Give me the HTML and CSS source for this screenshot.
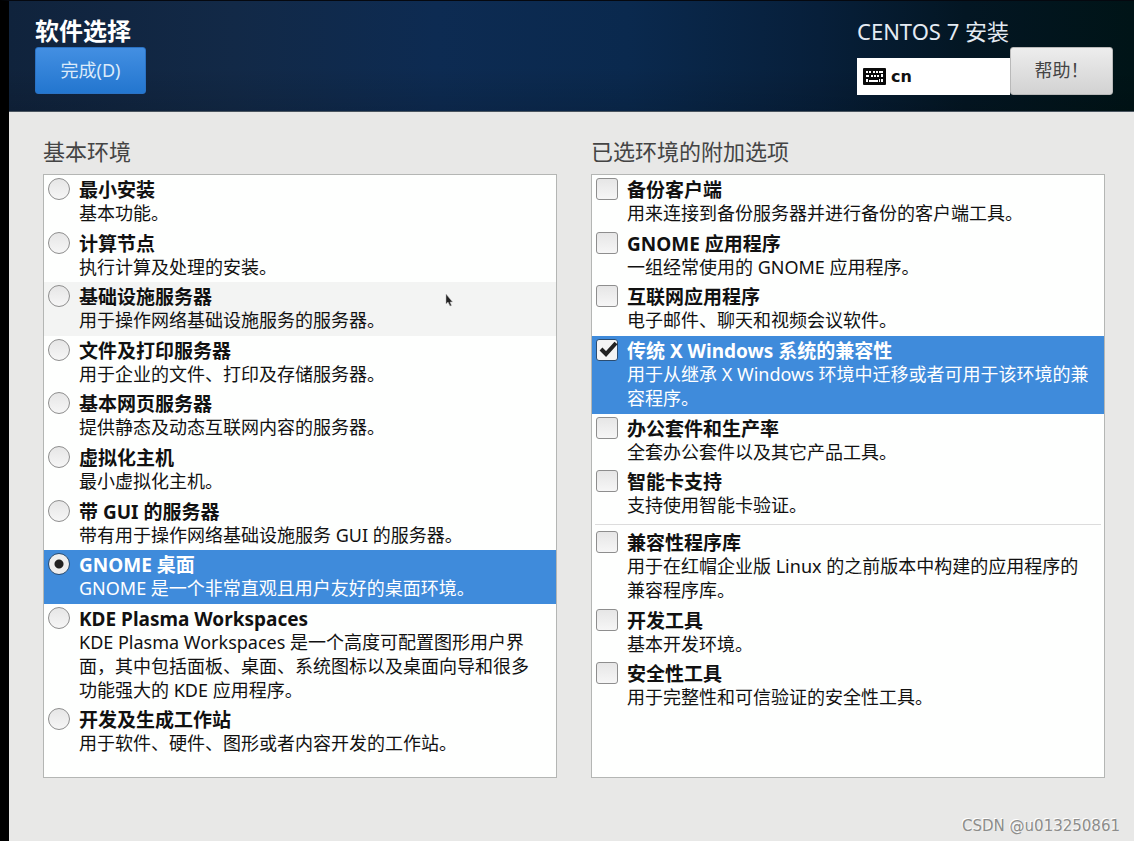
FILE: index.html
```html
<!DOCTYPE html>
<html lang="zh-CN">
<head>
<meta charset="utf-8">
<meta name="viewport" content="width=device-width, initial-scale=1">
<title>软件选择</title>
<link rel="stylesheet" href="styles.css">
</head>
<body>
<div class="screen">
  <header class="topbar">
    <div class="topbar-start">
      <h1 class="page-title">软件选择</h1>
      <button class="btn btn-primary" type="button">完成(D)</button>
    </div>
    <div class="topbar-end">
      <p class="product">CENTOS 7 安装</p>
      <div class="tools">
        <div class="keyboard">
          <svg class="keyboard-icon" viewBox="0 0 23 17" aria-hidden="true">
            <rect width="23" height="17" rx="1" fill="#0a0a0a"/>
            <g fill="#fff">
              <path d="M3 3h2v2H3zM6 3h2v2H6zM10 3h2v2h-2zM13 3h2v2h-2zM16 3h4v2h-4z"/>
              <path d="M3 7h3v2H3zM8 7h2v2H8zM11 7h2v2h-2zM14 7h2v2h-2zM18 6h2v3h-2z"/>
              <path d="M3 11h2v3H3zM6 12h9v2H6zM16 11h1v3h-1zM18 11h2v3h-2z"/>
            </g>
          </svg>
          <span>cn</span>
        </div>
        <button class="btn btn-help" type="button">帮助！</button>
      </div>
    </div>
  </header>

  <main class="content">
    <section class="panel">
      <h2 class="panel-title" id="base-title">基本环境</h2>
      <div class="list list-base" role="radiogroup" aria-labelledby="base-title">
        <label class="row"><input class="mark radio" type="radio" name="env"><span class="text"><b class="name">最小安装</b><span class="desc">基本功能。</span></span></label>
        <label class="row"><input class="mark radio" type="radio" name="env"><span class="text"><b class="name">计算节点</b><span class="desc">执行计算及处理的安装。</span></span></label>
        <label class="row row-hover"><input class="mark radio" type="radio" name="env"><span class="text"><b class="name">基础设施服务器</b><span class="desc">用于操作网络基础设施服务的服务器。</span></span>
          <svg class="pointer" viewBox="0 0 8 13" aria-hidden="true"><path d="M1 0v10l2-2 2 4 1.500-.5L5 8h2.500z" fill="#222" stroke="#bbb" stroke-width=".5"/></svg>
        </label>
        <label class="row"><input class="mark radio" type="radio" name="env"><span class="text"><b class="name">文件及打印服务器</b><span class="desc">用于企业的文件、打印及存储服务器。</span></span></label>
        <label class="row"><input class="mark radio" type="radio" name="env"><span class="text"><b class="name">基本网页服务器</b><span class="desc">提供静态及动态互联网内容的服务器。</span></span></label>
        <label class="row"><input class="mark radio" type="radio" name="env"><span class="text"><b class="name">虚拟化主机</b><span class="desc">最小虚拟化主机。</span></span></label>
        <label class="row"><input class="mark radio" type="radio" name="env"><span class="text"><b class="name">带 GUI 的服务器</b><span class="desc">带有用于操作网络基础设施服务 GUI 的服务器。</span></span></label>
        <label class="row"><input class="mark radio" type="radio" name="env" checked><span class="text"><b class="name">GNOME 桌面</b><span class="desc">GNOME 是一个非常直观且用户友好的桌面环境。</span></span></label>
        <label class="row"><input class="mark radio" type="radio" name="env"><span class="text"><b class="name">KDE Plasma Workspaces</b><span class="desc">KDE Plasma Workspaces 是一个高度可配置图形用户界<br>面，其中包括面板、桌面、系统图标以及桌面向导和很多<br>功能强大的 KDE 应用程序。</span></span></label>
        <label class="row"><input class="mark radio" type="radio" name="env"><span class="text"><b class="name">开发及生成工作站</b><span class="desc">用于软件、硬件、图形或者内容开发的工作站。</span></span></label>
      </div>
    </section>

    <section class="panel">
      <h2 class="panel-title" id="addon-title">已选环境的附加选项</h2>
      <div class="list list-addons" role="group" aria-labelledby="addon-title">
        <label class="row"><input class="mark check" type="checkbox"><span class="text"><b class="name">备份客户端</b><span class="desc">用来连接到备份服务器并进行备份的客户端工具。</span></span></label>
        <label class="row"><input class="mark check" type="checkbox"><span class="text"><b class="name">GNOME 应用程序</b><span class="desc">一组经常使用的 GNOME 应用程序。</span></span></label>
        <label class="row"><input class="mark check" type="checkbox"><span class="text"><b class="name">互联网应用程序</b><span class="desc">电子邮件、聊天和视频会议软件。</span></span></label>
        <label class="row"><span class="check-wrap"><input class="mark check" type="checkbox" checked><svg class="tick" viewBox="0 0 22 22" aria-hidden="true"><path d="M5 10l5 5 10-11" fill="none" stroke="#222" stroke-width="4"/></svg></span><span class="text"><b class="name">传统 X Windows 系统的兼容性</b><span class="desc">用于从继承 X Windows 环境中迁移或者可用于该环境的兼<br>容程序。</span></span></label>
        <label class="row"><input class="mark check" type="checkbox"><span class="text"><b class="name">办公套件和生产率</b><span class="desc">全套办公套件以及其它产品工具。</span></span></label>
        <label class="row"><input class="mark check" type="checkbox"><span class="text"><b class="name">智能卡支持</b><span class="desc">支持使用智能卡验证。</span></span></label>
        <hr class="divider">
        <label class="row"><input class="mark check" type="checkbox"><span class="text"><b class="name">兼容性程序库</b><span class="desc">用于在红帽企业版 Linux 的之前版本中构建的应用程序的<br>兼容程序库。</span></span></label>
        <label class="row"><input class="mark check" type="checkbox"><span class="text"><b class="name">开发工具</b><span class="desc">基本开发环境。</span></span></label>
        <label class="row"><input class="mark check" type="checkbox"><span class="text"><b class="name">安全性工具</b><span class="desc">用于完整性和可信验证的安全性工具。</span></span></label>
      </div>
    </section>
  </main>
  <p class="watermark">CSDN @u013250861</p>
</div>
</body>
</html>
```
FILE: styles.css
```css
* {
  box-sizing: border-box;
}

body {
  margin: 0;
  background: #000;
  color: #111;
  font-family: "Noto Sans", "Noto Sans CJK SC", sans-serif;
  font-size: 18px;
}

h1, h2, p {
  margin: 0;
}

.screen {
  position: relative;
  display: flex;
  flex-direction: column;
  min-height: 100vh;
  border-top: 1px solid #05080f;
  border-left: 9px solid #000;
  background: #e8e8e7;
}

/* Header */
.topbar {
  display: flex;
  justify-content: space-between;
  height: 111px;
  padding: 14px 21px 0 26px;
  border-bottom: 1px solid #4a5560;
  background:
    linear-gradient(180deg, rgba(0, 0, 0, 0) 60%, rgba(0, 0, 0, .12)),
    linear-gradient(90deg, #10233c 0%, #122947 20%, #0d2b52 38%, #0a294e 55%, #071f3a 72%, #031623 85%, #001417 100%);
}

.page-title {
  height: 32px;
  color: #fff;
  font-size: 24px;
  line-height: 32px;
}

.btn {
  padding: 0 6px 4px;
  border-radius: 3px;
  font: inherit;
}

.btn-primary {
  width: 111px;
  height: 47px;
  border: 1px solid #2a72c4;
  background: linear-gradient(#438fe2, #2376cf);
  color: #dcebfa;
}

.product {
  height: 32px;
  color: #e4ebf3;
  font-size: 22px;
  line-height: 32px;
}

.tools {
  display: flex;
  align-items: flex-end;
}

.keyboard {
  display: flex;
  align-items: center;
  gap: 5px;
  width: 153px;
  height: 37px;
  padding-left: 6px;
  background: #fff;
  font-family: "DejaVu Sans", sans-serif;
  font-size: 16px;
  font-weight: bold;
}

.keyboard-icon {
  width: 23px;
  height: 17px;
}

.btn-help {
  width: 103px;
  height: 48px;
  border: 1px solid #b9b9b9;
  background: linear-gradient(#ededed, #d2d2d2);
  color: #444;
  font-family: "Noto Sans CJK TC", "Noto Sans CJK SC", sans-serif;
}

/* Panels */
.content {
  flex: 1;
  display: grid;
  grid-template-columns: 1fr 1fr;
  gap: 34px;
  padding: 24px 29px 63px 34px;
}

.panel {
  display: flex;
  flex-direction: column;
}

.panel-title {
  height: 38px;
  color: #444;
  font-size: 22px;
  font-weight: normal;
  line-height: 30px;
}

.list {
  flex: 1;
  display: flex;
  flex-direction: column;
  border: 1px solid #b4b6b4;
  background: #fefffe;
}

.list-base {
  padding-bottom: 18px;
}

.list-addons {
  padding-bottom: 64px;
}

.row {
  position: relative;
  flex: 1 0 auto;
  display: flex;
  align-items: flex-start;
  gap: 9px;
  padding: 2px 0 3px 4px;
}

.row-hover {
  background: #f3f4f3;
}

.row:has(:checked) {
  background: #3f8bdb;
  color: #fff;
}

.text,
.name,
.desc {
  display: block;
}

.name {
  height: 24px;
  font-size: 19px;
  line-height: 26px;
}

.desc {
  line-height: 24px;
  white-space: nowrap;
}

.mark {
  appearance: none;
  flex: none;
  display: block;
  width: 22px;
  height: 22px;
  margin: 1px 0 0;
  border: 1px solid #8e8e8e;
  background: linear-gradient(#e6e6e6, #f6f6f6);
}

.radio {
  border-radius: 50%;
}

.radio:checked {
  border-color: #2b4c70;
  background: radial-gradient(circle, #222 0 4px, #eee 5px);
}

.check {
  border-radius: 3px;
}

.check:checked {
  border-color: #2b4c70;
  background: #f4f4f4;
}

.check-wrap {
  position: relative;
}

.tick {
  position: absolute;
  top: 1px;
  left: 0;
  width: 22px;
  height: 22px;
  pointer-events: none;
}

.pointer {
  position: absolute;
  top: 12px;
  left: 401px;
  width: 8px;
  height: 13px;
}

.divider {
  width: calc(100% - 6px);
  height: 1px;
  margin: 3px;
  border: 0;
  background: #dcdcdc;
}

.watermark {
  position: absolute;
  right: 14px;
  bottom: 5px;
  color: #8d8d8b;
  font-family: "DejaVu Sans", sans-serif;
  font-size: 15px;
  line-height: 20px;
  text-shadow: -1px -1px 0 #fff;
}
```
